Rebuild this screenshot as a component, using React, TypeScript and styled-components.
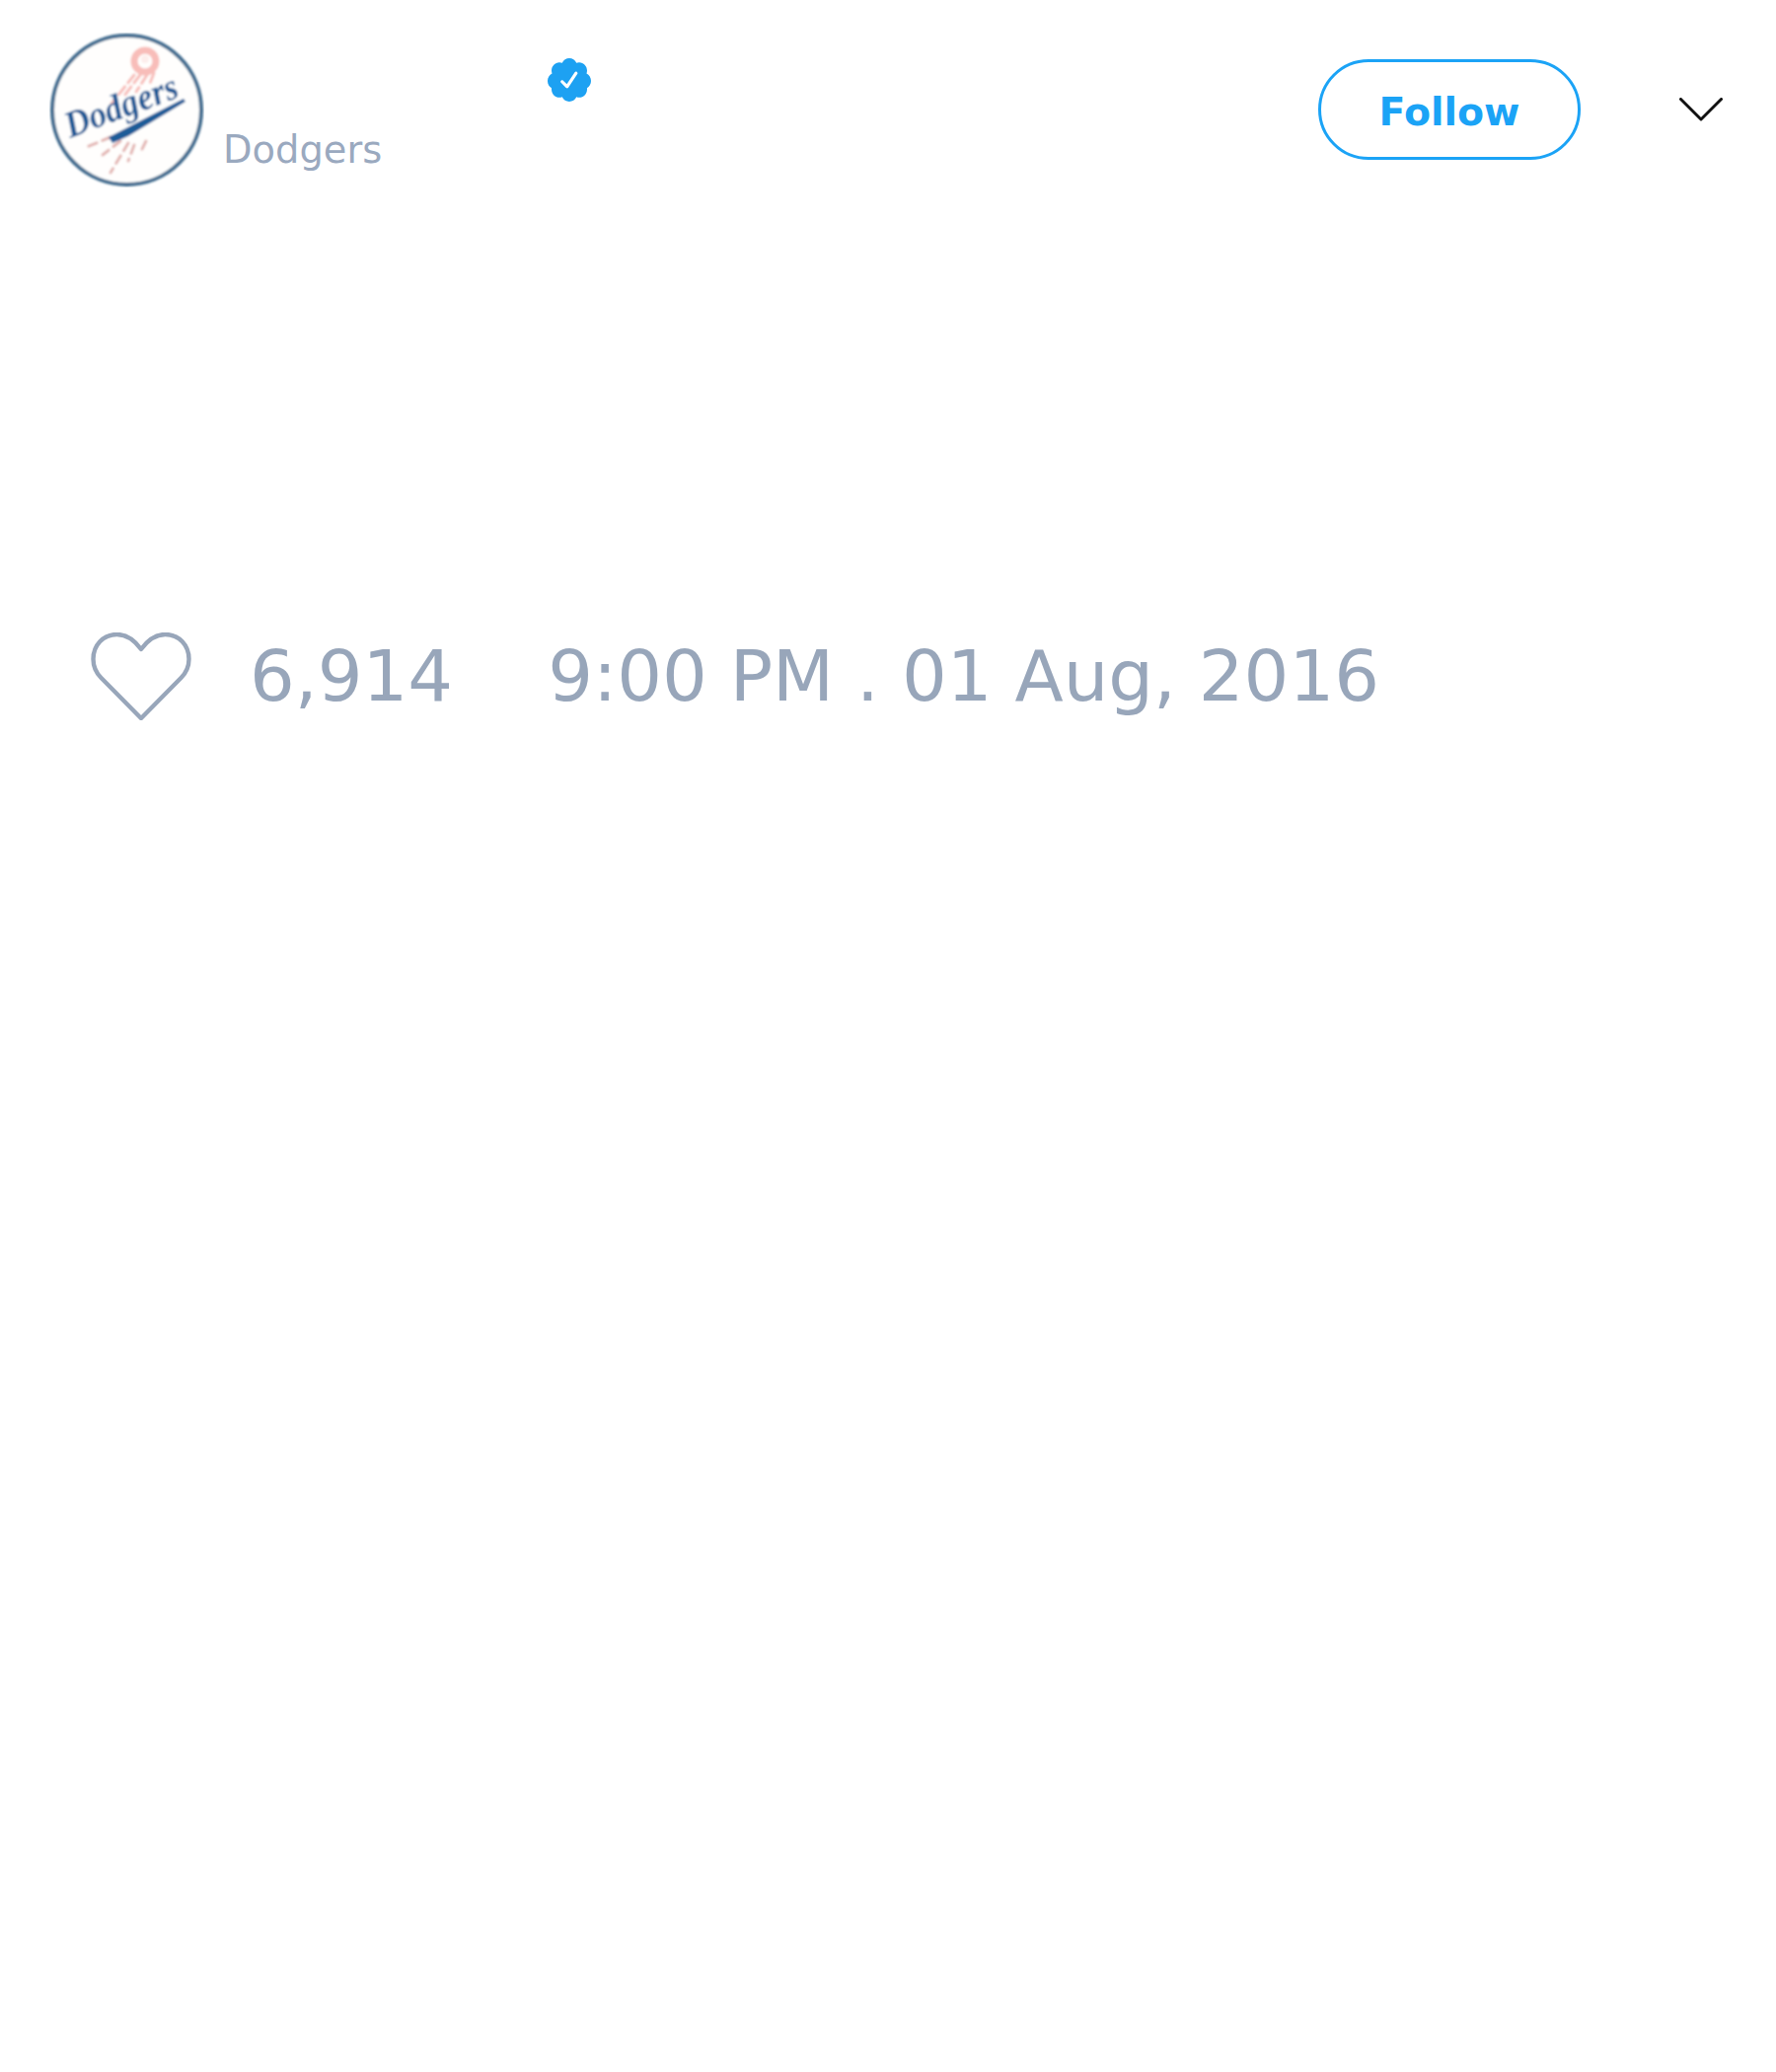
import React from "react";
import styled, { createGlobalStyle } from "styled-components";

const GlobalStyle = createGlobalStyle`
  html, body {
    margin: 0;
    padding: 0;
    background: #fff;
    font-family: "DejaVu Sans", sans-serif;
  }
`;

const TeamLogo = () => (
  <LogoSvg viewBox="0 0 157 157">
    <defs>
      <filter id="soft" x="-5%" y="-5%" width="110%" height="110%">
        <feGaussianBlur stdDeviation="1" />
      </filter>
    </defs>
    <g filter="url(#soft)">
      <circle cx="78.5" cy="78.5" r="75.5" fill="#fffefd" stroke="#3f6b8e" strokeWidth="4" />
      <circle cx="97" cy="29" r="11" fill="none" stroke="#f8bdb9" strokeWidth="7" />
      <circle cx="97" cy="27" r="4" fill="#fdeeec" />
      <g stroke="#f7bdb9" strokeWidth="3" strokeLinecap="round" strokeDasharray="10 5">
        <path d="M86 43 L63 72" />
        <path d="M92 43 L76 64" />
        <path d="M99 43 L88 60" />
        <path d="M106 41 L101 54" />
      </g>
      <g stroke="#e3b5b2" strokeWidth="3" strokeLinecap="round" strokeDasharray="9 6">
        <path d="M62 106 L38 116" />
        <path d="M72 110 L54 124" />
        <path d="M80 112 L62 142" />
        <path d="M86 114 L80 130" />
        <path d="M98 110 L92 122" />
      </g>
      <LogoText x="21" y="107" transform="rotate(-20.7 21 107)" textLength="120" lengthAdjust="spacingAndGlyphs">
        Dodgers
      </LogoText>
      <path d="M60 106 L136 67 L138 70 L80 105 L64 112 Z" fill="#1f5c98" />
    </g>
  </LogoSvg>
);

const App = () => {
  return (
    <>
      <GlobalStyle />
      <Page>
        <Header>
          <TeamLogo />
          <NameBlock>
            <NameRow>
              <BadgeSvg viewBox="1.5 1.5 21 21">
                <path
                  fill="#1da1f2"
                  d="M22.5 12.5c0-1.58-.875-2.95-2.148-3.6.154-.435.238-.905.238-1.4 0-2.21-1.71-3.998-3.818-3.998-.47 0-.92.084-1.336.25C14.818 2.415 13.51 1.5 12 1.5s-2.816.917-3.437 2.25c-.415-.165-.866-.25-1.336-.25-2.11 0-3.818 1.79-3.818 4 0 .494.083.964.237 1.4-1.272.65-2.147 2.018-2.147 3.6 0 1.495.782 2.798 1.942 3.486-.02.17-.032.34-.032.514 0 2.21 1.708 4 3.818 4 .47 0 .92-.086 1.335-.25.62 1.334 1.926 2.25 3.437 2.25 1.512 0 2.818-.916 3.437-2.25.415.163.865.248 1.336.248 2.11 0 3.818-1.79 3.818-4 0-.174-.012-.344-.033-.513 1.158-.687 1.943-1.99 1.943-3.484zm-6.616-3.334l-4.334 6.5c-.145.217-.382.334-.625.334-.143 0-.288-.04-.416-.126l-.115-.094-2.415-2.415c-.293-.293-.293-.768 0-1.06s.768-.294 1.06 0l1.77 1.767 3.825-5.74c.23-.345.696-.436 1.04-.207.346.23.44.696.21 1.04z"
                />
              </BadgeSvg>
            </NameRow>
            <Handle>Dodgers</Handle>
          </NameBlock>
          <Actions>
            <FollowButton>Follow</FollowButton>
            <ChevronSvg viewBox="0 0 44 24">
              <path d="M1.5 1.5 L22 22 L42.5 1.5" />
            </ChevronSvg>
          </Actions>
        </Header>
        <Stats>
          <HeartSvg viewBox="0 0 101 89">
            <path d="M50.5 17 C44 8 36 2 26 2 C12 2 2 13 2 27 C2 35 5 41 10 46 L50.5 87 L91 46 C96 41 99 35 99 27 C99 13 89 2 75 2 C65 2 57 8 50.5 17 Z" />
          </HeartSvg>
          <LikeCount>6,914</LikeCount>
          <Timestamp>9:00 PM . 01 Aug, 2016</Timestamp>
        </Stats>
      </Page>
    </>
  );
};

export default App;

const Page = styled.div`
  width: 1800px;
  height: 2100px;
  box-sizing: border-box;
  padding: 33px 54px 0 50px;
  background: #fff;
`;

const Header = styled.div`
  display: flex;
  align-items: flex-start;
`;

const LogoSvg = styled.svg`
  width: 157px;
  height: 157px;
  flex-shrink: 0;
`;

const LogoText = styled.text`
  font-family: "Liberation Serif", serif;
  font-style: italic;
  font-weight: 700;
  font-size: 38px;
  fill: #1d5a96;
`;

const NameBlock = styled.div`
  margin-left: 19px;
  display: flex;
  flex-direction: column;
`;

const NameRow = styled.div`
  height: 71px;
  margin-top: 26px;
  padding-left: 329px;
`;

const BadgeSvg = styled.svg`
  display: block;
  width: 44px;
  height: 44px;
`;

const Handle = styled.div`
  font-size: 38.4px;
  line-height: 44px;
  color: #9aa9bf;
`;

const Actions = styled.div`
  margin-left: auto;
  margin-top: 27px;
  display: flex;
  align-items: center;
  gap: 100px;
`;

const FollowButton = styled.button`
  width: 266px;
  height: 102px;
  box-sizing: border-box;
  border: 3px solid #1ba3f6;
  border-radius: 51px;
  background: #fff;
  color: #1ba3f6;
  font-family: "DejaVu Sans", sans-serif;
  font-size: 39.4px;
  font-weight: 700;
  padding: 3px 0 0;
`;

const ChevronSvg = styled.svg`
  width: 44px;
  height: 24px;
  fill: none;
  stroke: #111;
  stroke-width: 3;
  stroke-linecap: round;
  stroke-linejoin: round;
`;

const Stats = styled.div`
  margin-top: 450px;
  padding-left: 42px;
  display: flex;
  align-items: center;
  color: #98a6ba;
  font-size: 72px;
  line-height: 90px;
`;

const HeartSvg = styled.svg`
  width: 102px;
  height: 89px;
  fill: none;
  stroke: #98a6ba;
  stroke-width: 4.4;
  stroke-linejoin: round;
  flex-shrink: 0;
`;

const LikeCount = styled.span`
  margin-left: 59px;
`;

const Timestamp = styled.span`
  margin-left: 96px;
`;
